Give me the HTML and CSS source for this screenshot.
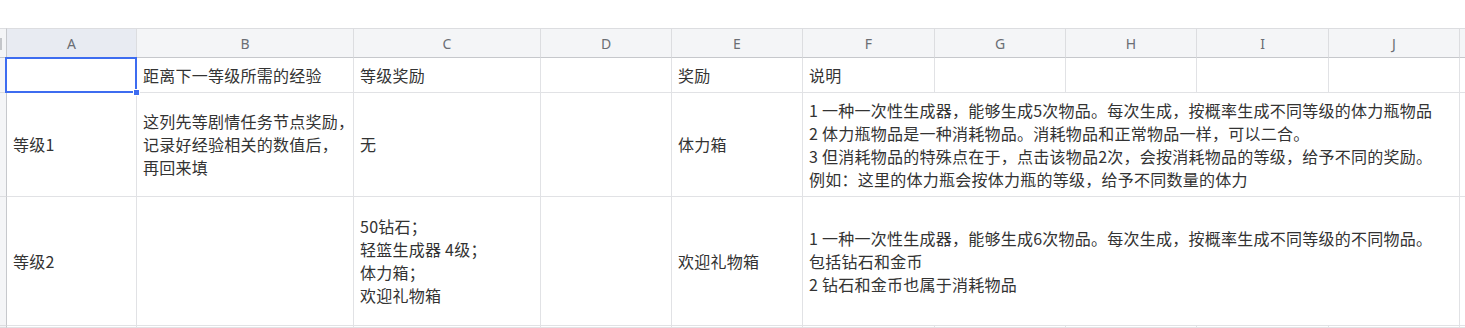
FILE: index.html
```html
<!DOCTYPE html>
<html lang="zh-CN">
<head>
    <meta charset="UTF-8">
    <meta name="viewport" content="width=device-width, initial-scale=1.0">
    <title>等级奖励表</title>
    <link rel="stylesheet" href="styles.css">
</head>
<body>
    <div class="sheet">
        <div class="grid">
            <!-- column headers -->
            <div class="corner"></div>
            <div class="col-head active">A</div>
            <div class="col-head">B</div>
            <div class="col-head">C</div>
            <div class="col-head">D</div>
            <div class="col-head">E</div>
            <div class="col-head">F</div>
            <div class="col-head">G</div>
            <div class="col-head">H</div>
            <div class="col-head">I</div>
            <div class="col-head">J</div>
            <div class="col-head rest"></div>

            <!-- row 1 -->
            <div class="row-head"></div>
            <div class="cell selected"><span class="handle"></span></div>
            <div class="cell">距离下一等级所需的经验</div>
            <div class="cell">等级奖励</div>
            <div class="cell"></div>
            <div class="cell">奖励</div>
            <div class="cell">说明</div>
            <div class="cell"></div>
            <div class="cell"></div>
            <div class="cell"></div>
            <div class="cell"></div>
            <div class="cell rest"></div>

            <!-- row 2 -->
            <div class="row-head"></div>
            <div class="cell">等级1</div>
            <div class="cell">这列先等剧情任务节点奖励，<br>记录好经验相关的数值后，<br>再回来填</div>
            <div class="cell">无</div>
            <div class="cell"></div>
            <div class="cell">体力箱</div>
            <div class="cell wide">1 一种一次性生成器，能够生成5次物品。每次生成，按概率生成不同等级的体力瓶物品<br>2 体力瓶物品是一种消耗物品。消耗物品和正常物品一样，可以二合。<br>3 但消耗物品的特殊点在于，点击该物品2次，会按消耗物品的等级，给予不同的奖励。<br>例如：这里的体力瓶会按体力瓶的等级，给予不同数量的体力</div>
            <div class="cell rest"></div>

            <!-- row 3 -->
            <div class="row-head"></div>
            <div class="cell">等级2</div>
            <div class="cell"></div>
            <div class="cell">50钻石；<br>轻篮生成器 4级；<br>体力箱；<br>欢迎礼物箱</div>
            <div class="cell"></div>
            <div class="cell">欢迎礼物箱</div>
            <div class="cell wide">1 一种一次性生成器，能够生成6次物品。每次生成，按概率生成不同等级的不同物品。<br>包括钻石和金币<br>2 钻石和金币也属于消耗物品</div>
            <div class="cell rest"></div>

            <!-- row 4 (cut off) -->
            <div class="row-head"></div>
            <div class="cell"></div>
            <div class="cell"></div>
            <div class="cell"></div>
            <div class="cell"></div>
            <div class="cell"></div>
            <div class="cell"></div>
            <div class="cell"></div>
            <div class="cell"></div>
            <div class="cell"></div>
            <div class="cell"></div>
            <div class="cell rest"></div>
        </div>
    </div>
</body>
</html>
```

FILE: styles.css
```css
html, body {
    margin: 0;
    height: 100%;
    overflow: hidden;
    background: #ffffff;
}
body {
    font-family: "Noto Sans CJK SC", "Noto Sans", sans-serif;
    color: #333333;
}
.sheet {
    padding-top: 28px;
}
.grid {
    display: grid;
    grid-template-columns: 7px 130px 217px 187px 131px 131px 132px 131px 131px 132px 131px 1fr;
    grid-template-rows: 30px 35px 104px 129px 2px;
}
.corner,
.col-head {
    box-sizing: border-box;
    background: #f4f5f7;
    border-top: 1px solid #dcdde0;
    border-bottom: 1px solid #c6c8cc;
}
.corner {
    position: relative;
    border-right: 1px solid #c6c8cc;
}
.corner::before {
    content: "";
    position: absolute;
    left: 0;
    top: 9px;
    width: 2px;
    height: 12px;
    background: #c4c6ca;
}
.col-head {
    border-right: 1px solid #dcdde0;
    display: flex;
    justify-content: center;
    align-items: center;
    font-family: "Noto Sans", sans-serif;
    font-size: 14px;
    color: #6b6e74;
}
.col-head.active {
    background: #e8ebf2;
}
.col-head.rest {
    border-right: none;
}
.row-head {
    box-sizing: border-box;
    background: #f4f5f7;
    border-right: 1px solid #c6c8cc;
    border-bottom: 1px solid #dcdde0;
}
.cell {
    box-sizing: border-box;
    border-right: 1px solid #e1e2e5;
    border-bottom: 1px solid #e1e2e5;
    padding: 0 6px;
    display: flex;
    align-items: center;
    font-size: 16px;
    line-height: 23px;
    letter-spacing: 0.25px;
    white-space: nowrap;
}
.cell.wide {
    grid-column: span 5;
}
.cell.rest {
    border-right: none;
}
.selected {
    position: relative;
}
.selected::after {
    content: "";
    position: absolute;
    top: -1px;
    left: -2px;
    right: -1px;
    bottom: -1px;
    border: 2px solid #3d6cf0;
}
.handle {
    position: absolute;
    right: -4px;
    bottom: -4px;
    width: 5px;
    height: 5px;
    background: #3d6cf0;
    border: 1px solid #ffffff;
    z-index: 1;
}
```
